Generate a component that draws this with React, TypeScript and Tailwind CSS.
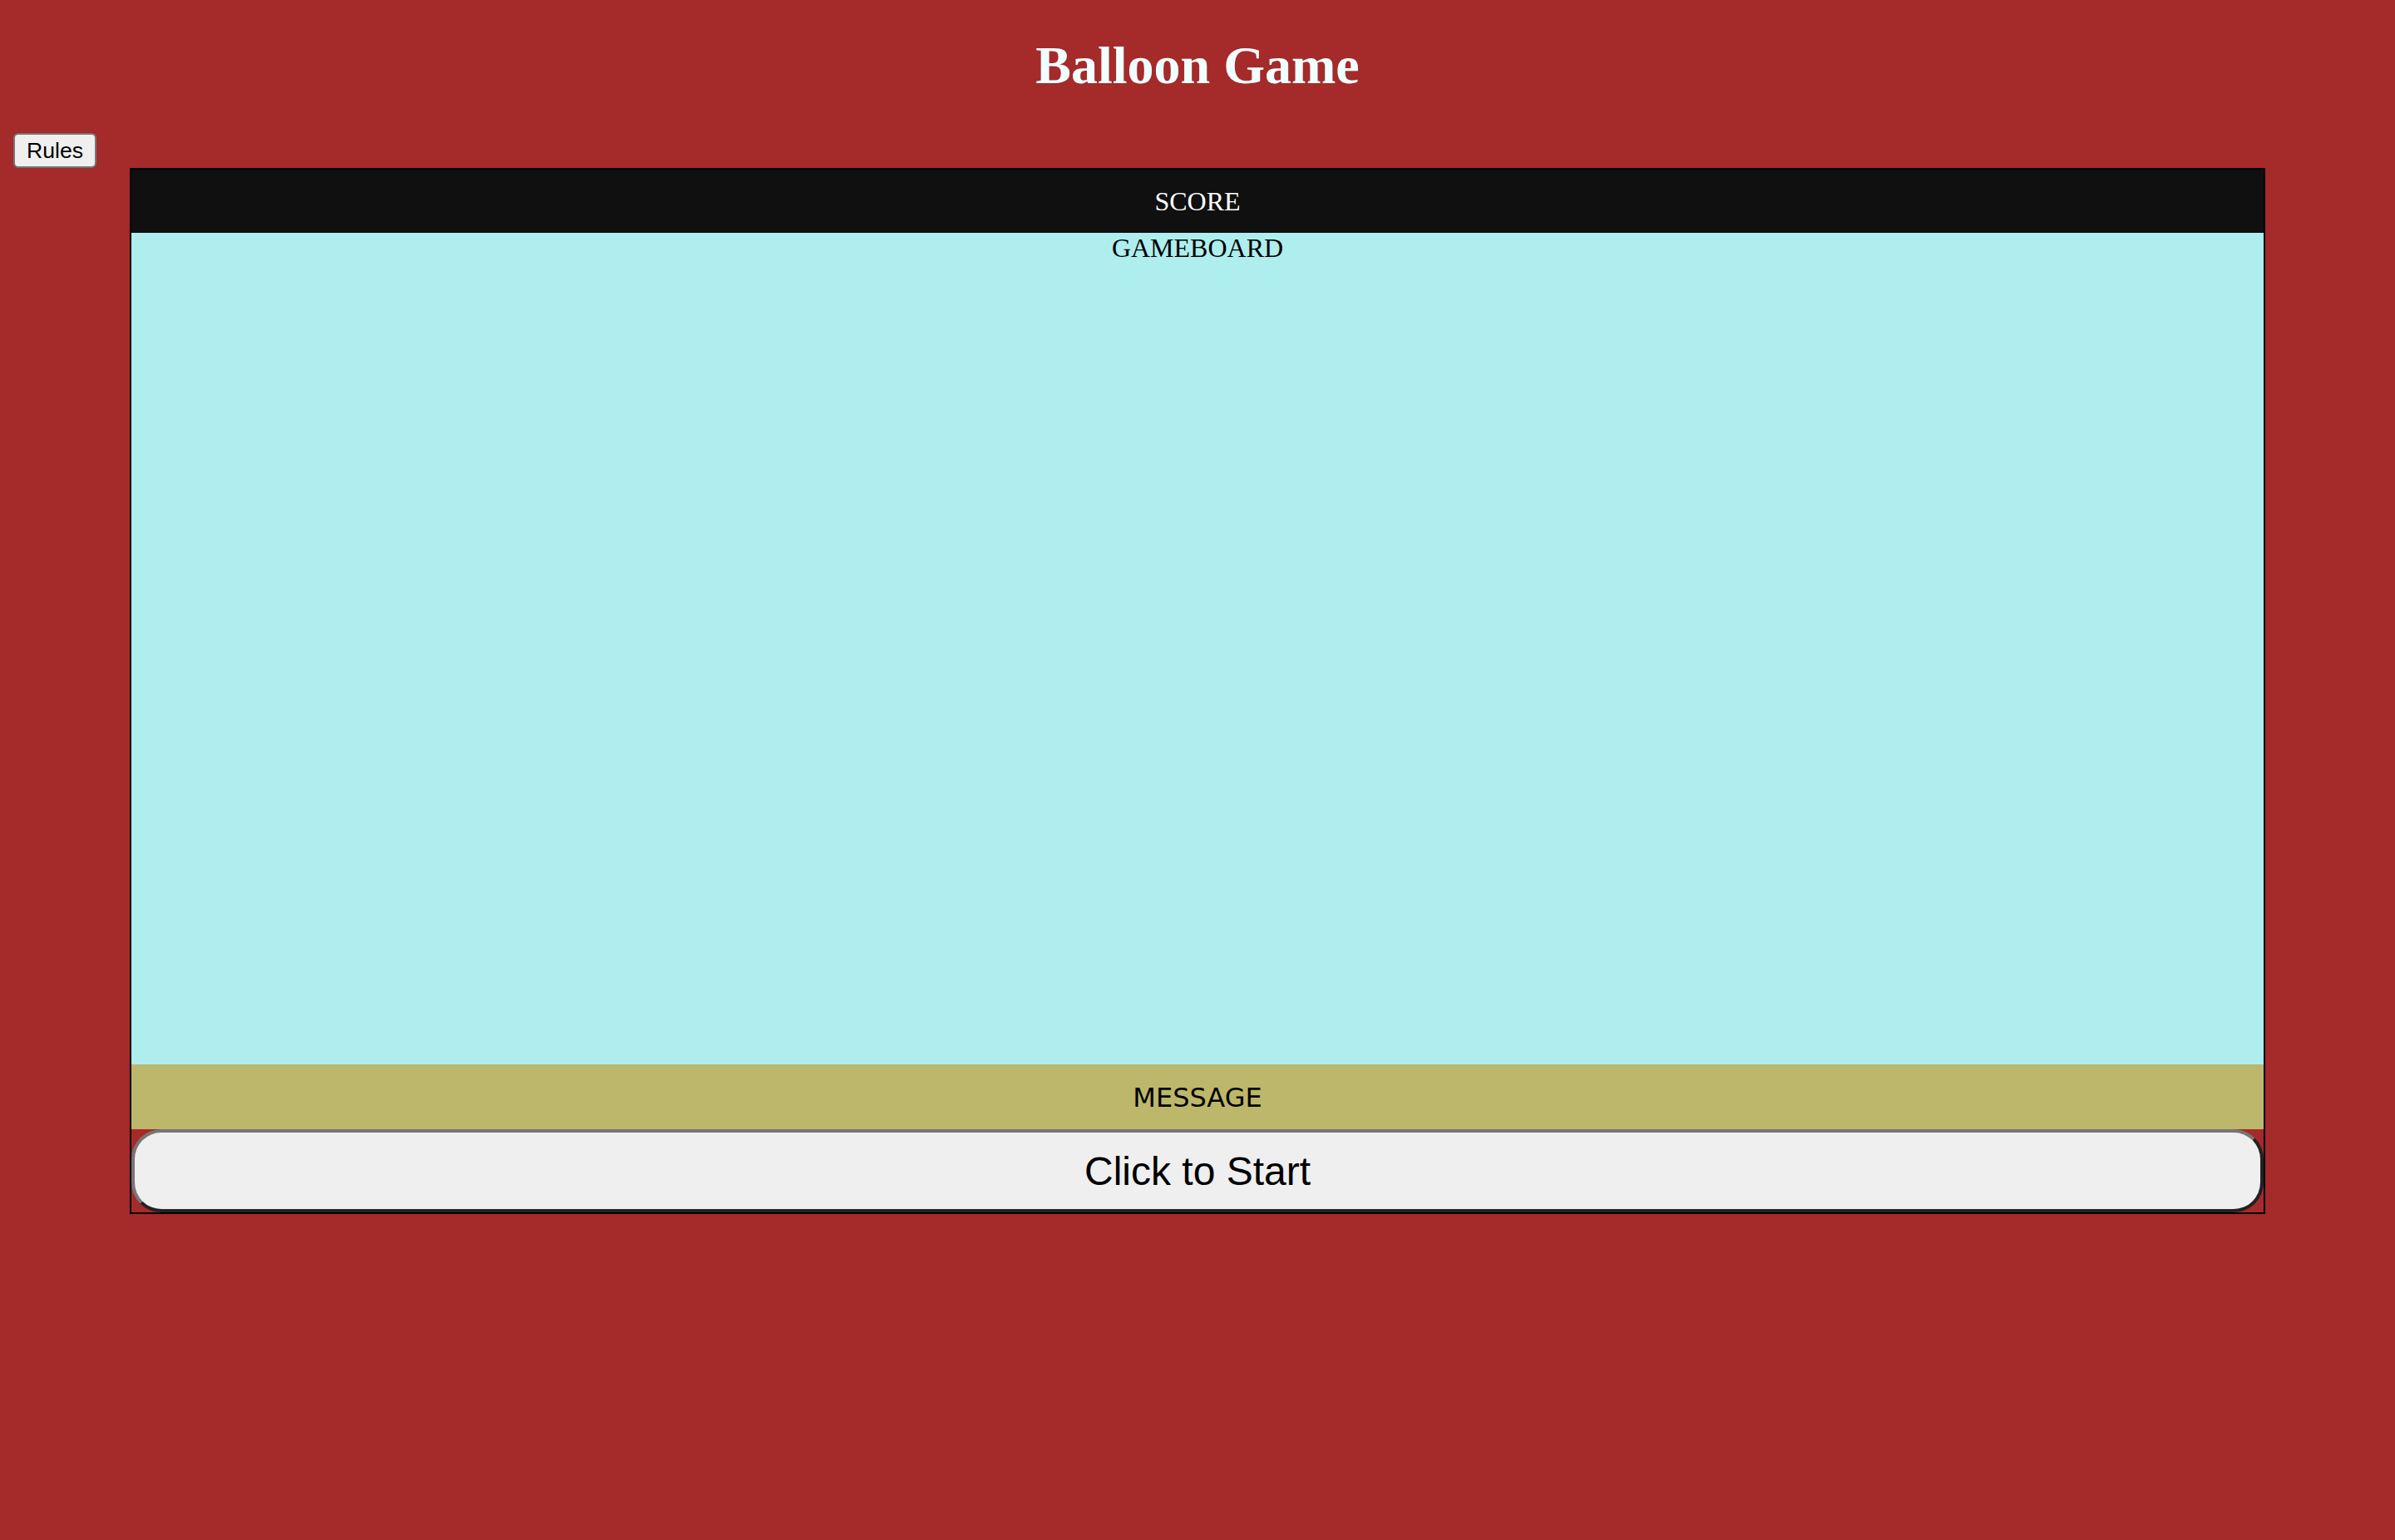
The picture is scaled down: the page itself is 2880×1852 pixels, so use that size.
export default function App() {
  return (
    <div className="min-h-screen bg-[#a52a2a] px-[16px] pt-[42px] pb-[16px]">
      <h1 className="m-0 text-center font-['Liberation_Serif',serif] text-[64px] font-bold leading-[74px] text-[#f0ffff]">
        Balloon Game
      </h1>

      <div className="mt-[44px]">
        <button className="block rounded-[6px] border-2 border-[#767676] bg-[#efefef] px-[14px] py-[4px] font-['Liberation_Sans',Arial,sans-serif] text-[26.667px] leading-[30px] text-black">
          Rules
        </button>
      </div>

      <div className="mx-auto box-content w-[90%] border-2 border-black">
        <div className="bg-[#101010] py-[20px] text-center font-['Liberation_Serif',serif] text-[32px] leading-[36px] text-white">
          SCORE
        </div>

        <div className="h-[1000px] bg-[#afeeee] text-center font-['Liberation_Serif',serif] text-[32px] leading-[36px] text-black">
          GAMEBOARD
        </div>

        <div className="bg-[#bdb76b] pt-[21px] pb-[19px] text-center font-['DejaVu_Sans',Verdana,sans-serif] text-[32px] leading-[38px] text-black">
          MESSAGE
        </div>

        <button className="block w-full rounded-[36px] border-4 border-t-[#767676] border-l-[#767676] border-r-[#222] border-b-[#222] bg-[#efefef] pt-[19px] pb-[17px] text-center font-['Liberation_Sans',Arial,sans-serif] text-[48px] leading-[56px] text-black">
          Click to Start
        </button>
      </div>
    </div>
  )
}
